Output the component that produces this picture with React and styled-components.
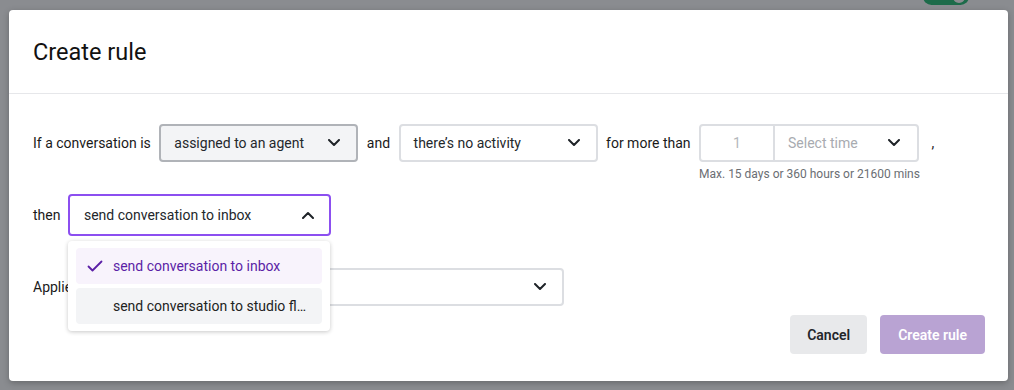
import styled, { createGlobalStyle } from 'styled-components'

const Global = createGlobalStyle`
html, body {
  margin: 0;
  padding: 0;
  background: #8a8c90;
  font-family: Roboto, "Liberation Sans", sans-serif;
  color: #1f2328;
}
#root {
  position: relative;
  height: 390px;
  overflow: hidden;
  padding-top: 10px;
  box-sizing: border-box;
}
`

const BgToggle = styled.div`
position: absolute;
left: 923px;
top: -12px;
width: 46px;
height: 17px;
border-radius: 9px;
background: #1d6b4a;
&::after {
  content: '';
  position: absolute;
  right: 4px;
  top: 3px;
  width: 12px;
  height: 12px;
  border-radius: 50%;
  background: #8a8c90;
}
`

const Modal = styled.div`
position: relative;
margin-left: 9px;
width: 999px;
height: 371px;
background: #fff;
border-radius: 4px;
box-shadow: 0 2px 6px rgba(0,0,0,0.25);
display: flex;
flex-direction: column;
`

const Header = styled.div`
height: 84px;
box-sizing: border-box;
padding: 0 24px;
display: flex;
align-items: center;
border-bottom: 1px solid #e6e7ea;
font-size: 23.5px;
color: #111;
`

const Body = styled.div`
padding: 30px 24px 0;
display: flex;
flex-direction: column;
flex: 1;
`

const Row = styled.div`
display: flex;
align-items: ${p => p.$top ? 'flex-start' : 'center'};
gap: ${p => p.$gap || 8.5}px;
margin-bottom: ${p => p.$mb || 0}px;
font-size: 14px;
position: relative;
`

const Label = styled.span`
font-size: 14px;
color: #1a1a1a;
line-height: 38px;
white-space: nowrap;
`

const Select = styled.div`
position: relative;
box-sizing: border-box;
width: ${p => p.$w}px;
height: ${p => p.$open ? 42 : 38}px;
display: flex;
align-items: center;
justify-content: space-between;
padding: 0 ${p => p.$open ? 15 : 16}px 0 ${p => p.$open ? 14 : 13}px;
background: ${p => p.$filled ? '#f3f4f6' : '#fff'};
border: ${p => p.$open ? '2px solid #8c4ff0' : p.$filled ? '2px solid #b0b3b8' : '2px solid #dcdee2'};
border-radius: 4px;
font-size: 14px;
color: #24272b;
`

const Chevron = ({ up }) => (
  <svg width="12" height="8" viewBox="0 0 12 8" fill="none">
    <path d={up ? 'M1 7l5-5 5 5' : 'M1 1l5 5 5-5'} stroke="#1f2328" strokeWidth="2" strokeLinecap="round" strokeLinejoin="round" />
  </svg>
)

const Group = styled.div`
display: flex;
flex-direction: column;
gap: 5px;
`

const InputGroup = styled.div`
display: flex;
height: 38px;
width: 220px;
box-sizing: border-box;
border: 2px solid #dcdee2;
border-radius: 4px;
`

const NumberBox = styled.div`
width: 72px;
border-right: 2px solid #dcdee2;
display: flex;
align-items: center;
justify-content: center;
color: #b4b7bb;
font-size: 14px;
`

const TimeBox = styled.div`
flex: 1;
display: flex;
align-items: center;
justify-content: space-between;
padding: 0 17px 0 13px;
color: #a8abb0;
font-size: 14px;
`

const Hint = styled.div`
font-size: 12px;
color: #6b6e73;
white-space: nowrap;
`

const Comma = styled.span`
margin-left: 3px;
line-height: 38px;
`

const Menu = styled.div`
position: absolute;
left: 0;
top: 47px;
width: 262px;
box-sizing: border-box;
padding: 7px 8px;
background: #fff;
border-radius: 4px;
box-shadow: 0 1px 4px rgba(0,0,0,0.22);
display: flex;
flex-direction: column;
gap: 4px;
z-index: 5;
`

const Option = styled.div`
height: 36px;
border-radius: 4px;
display: flex;
align-items: center;
padding-left: 11px;
gap: 10px;
background: ${p => p.$selected ? '#f8f3fc' : '#f3f4f6'};
color: ${p => p.$selected ? '#5b1fa6' : '#222'};
font-size: 14px;
white-space: nowrap;
`

const CheckSlot = styled.span`
width: 16px;
display: flex;
align-items: center;
`

const Footer = styled.div`
display: flex;
justify-content: flex-end;
gap: 13px;
padding: 0 23px 27px;
`

const Button = styled.button`
height: 39px;
padding: 0 ${p => p.$primary ? 18 : 17}px;
border: none;
border-radius: 4px;
font-family: Roboto, "Liberation Sans", sans-serif;
font-size: 14px;
font-weight: 600;
background: ${p => p.$primary ? '#b9a3d3' : '#e8e9eb'};
color: ${p => p.$primary ? '#fff' : '#23262a'};
`

export default function App() {
  return (
    <>
      <Global />
      <BgToggle />
      <Modal>
        <Header>Create rule</Header>
        <Body>
          <Row $top $mb={13}>
            <Label>If a conversation is</Label>
            <Select $w={199} $filled>assigned to an agent<Chevron /></Select>
            <Label>and</Label>
            <Select $w={199}>there’s no activity<Chevron /></Select>
            <Label>for more than</Label>
            <Group>
              <InputGroup>
                <NumberBox>1</NumberBox>
                <TimeBox>Select time<Chevron /></TimeBox>
              </InputGroup>
              <Hint>Max. 15 days or 360 hours or 21600 mins</Hint>
            </Group>
            <Comma>,</Comma>
          </Row>
          <Row $mb={32} $gap={7.5}>
            <Label>then</Label>
            <div style={{ position: 'relative' }}>
              <Select $w={263} $open>send conversation to inbox<Chevron up /></Select>
              <Menu>
                <Option $selected>
                  <CheckSlot>
                    <svg width="16" height="12" viewBox="0 0 16 12" fill="none">
                      <path d="M1.5 6.5l4 4L14.5 1.5" stroke="#5b1fa6" strokeWidth="1.8" strokeLinecap="round" strokeLinejoin="round" />
                    </svg>
                  </CheckSlot>
                  send conversation to inbox
                </Option>
                <Option>
                  <CheckSlot />
                  send conversation to studio fl…
                </Option>
              </Menu>
            </div>
          </Row>
          <Row>
            <Label>Applies to</Label>
            <Select $w={460}>&nbsp;<Chevron /></Select>
          </Row>
        </Body>
        <Footer>
          <Button>Cancel</Button>
          <Button $primary>Create rule</Button>
        </Footer>
      </Modal>
    </>
  )
}
